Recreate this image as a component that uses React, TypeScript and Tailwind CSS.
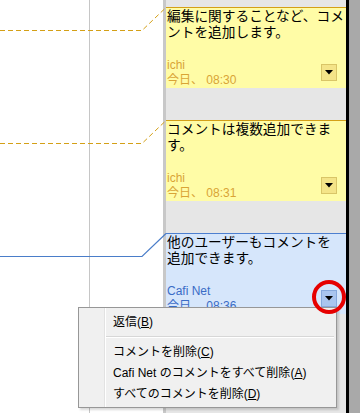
import React from 'react';

type Variant = 'yellow' | 'blue';

const styles: Record<Variant, { box: string; meta: string; button: string }> = {
  yellow: {
    box: 'bg-[#fffca6] border-t border-[#d4a017]',
    meta: 'text-[#d9a436]',
    button: 'bg-[#f4e488] border-[#d9c567]',
  },
  blue: {
    box: 'bg-[#d6e6fb] border-t border-[#4d7fcf]',
    meta: 'text-[#3a6cc6]',
    button: 'bg-[#a9c5ef] border-[#86a8dc]',
  },
};

const comments: { lines: string[]; author: string; date: string; variant: Variant }[] = [
  { lines: ['編集に関することなど、コメ', 'ントを追加します。'], author: 'ichi', date: '今日、 08:30', variant: 'yellow' },
  { lines: ['コメントは複数追加できま', 'す。'], author: 'ichi', date: '今日、 08:31', variant: 'yellow' },
  { lines: ['他のユーザーもコメントを', '追加できます。'], author: 'Cafi Net', date: '今日、 08:36', variant: 'blue' },
];

const Comment = ({ lines, author, date, variant }: (typeof comments)[number]) => {
  const s = styles[variant];
  return (
    <div className={`h-[81px] w-[180px] flex flex-col ${s.box}`}>
      <div className="-mt-[1px] pl-[1px] text-[13.7px] leading-[16px] text-black font-['Noto_Sans_CJK_JP',sans-serif]">
        {lines.map((l, i) => (
          <div key={i} className="whitespace-nowrap">
            {l}
          </div>
        ))}
      </div>
      <div className="mt-auto flex items-end justify-between pl-[1px] pr-[9px]">
        <div className={`text-[12px] leading-[15px] font-['Liberation_Sans','Noto_Sans_CJK_JP',sans-serif] ${s.meta}`}>
          <div>{author}</div>
          <div>{date}</div>
        </div>
        <div className={`mb-[7px] w-[16px] h-[17px] border flex items-center justify-center ${s.button}`}>
          <svg width="8" height="5" viewBox="0 0 8 5">
            <polygon points="0,0 8,0 4,4.5" fill="#000" />
          </svg>
        </div>
      </div>
    </div>
  );
};

const menuItems = [
  { label: '返信', key: 'B' },
  null,
  { label: 'コメントを削除', key: 'C' },
  { label: 'Cafi Net のコメントをすべて削除', key: 'A' },
  { label: 'すべてのコメントを削除', key: 'D' },
];

export default function App() {
  return (
    <div className="relative w-[360px] h-[413px] overflow-hidden flex bg-white">
      {/* document area */}
      <div className="w-[163px] h-full flex">
        <div className="w-[90px] h-full border-r border-[#c6c6c6]" />
      </div>

      {/* comment pane */}
      <div className="w-[3px] h-full bg-[#c8c8c8]" />
      <div className="w-[180px] h-full bg-[#e6e6e6] pt-[7px] flex flex-col gap-[32px]">
        {comments.map((c, i) => (
          <Comment key={i} {...c} />
        ))}
      </div>
      <div className="w-[3px] h-full bg-black" />
      <div className="flex-1 h-full bg-[#a9a9a9]" />

      {/* connector lines */}
      <svg className="absolute left-0 top-0 pointer-events-none" width="167" height="413">
        <polyline points="0,30.5 142,30.5 166,7.5" fill="none" stroke="#d4a017" strokeWidth="1" strokeDasharray="5 3" />
        <polyline points="0,143.5 142,143.5 166,120.5" fill="none" stroke="#d4a017" strokeWidth="1" strokeDasharray="5 3" />
        <polyline points="0,256.5 142,256.5 166,233.5" fill="none" stroke="#4a7dc9" strokeWidth="1.2" />
      </svg>

      {/* context menu */}
      <div className="absolute left-[78px] top-[307px] w-[259px] h-[101px] border border-[#979797] bg-[#f0f0f0] flex shadow-[2px_2px_2px_rgba(0,0,0,0.15)] font-['Liberation_Sans','Noto_Sans_CJK_JP',sans-serif] text-[12px] text-black">
        <div className="w-[26px] h-full border-r border-[#e2e2e2]" />
        <div className="flex-1 border-l border-white pt-[3px] flex flex-col">
          {menuItems.map((it, i) =>
            it ? (
              <div key={i} className="h-[21px] flex items-center pl-[7px] whitespace-nowrap">
                {it.label}(<span className="underline">{it.key}</span>)
              </div>
            ) : (
              <div key={i} className="h-[9px] flex flex-col justify-center pr-[2px]">
                <div className="h-[1px] bg-[#d7d7d7]" />
                <div className="h-[1px] bg-white" />
              </div>
            )
          )}
        </div>
      </div>

      {/* highlight */}
      <div className="absolute left-[312px] top-[280px] w-[34px] h-[34px] rounded-full border-[4px] border-[#e60000]" />
    </div>
  );
}
